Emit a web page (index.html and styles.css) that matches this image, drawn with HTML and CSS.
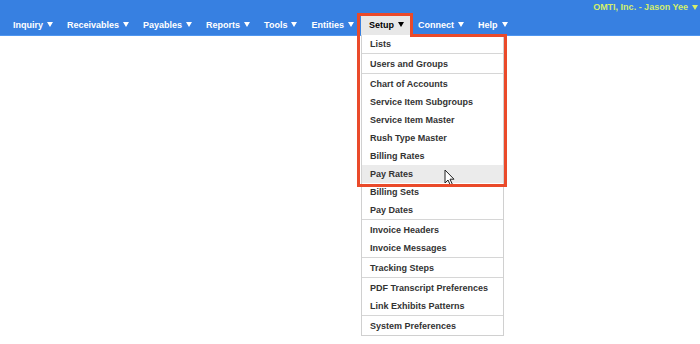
FILE: index.html
```html
<html>
  <head>
    <link rel="stylesheet" href="styles.css">
  </head>
  <body>

    <div class="topbar">
      <div class="user">OMTI, Inc. - Jason Yee<span class="caret"></span></div>
      <ul class="nav">
        <li class="nav-item">Inquiry<span class="caret"></span></li>
        <li class="nav-item">Receivables<span class="caret"></span></li>
        <li class="nav-item">Payables<span class="caret"></span></li>
        <li class="nav-item">Reports<span class="caret"></span></li>
        <li class="nav-item">Tools<span class="caret"></span></li>
        <li class="nav-item">Entities<span class="caret"></span></li>
        <li class="nav-item open">Setup<span class="caret"></span>
          <div class="dropdown">
            <div class="group">
              <div class="item">Lists</div>
            </div>
            <div class="group">
              <div class="item">Users and Groups</div>
            </div>
            <div class="group">
              <div class="item">Chart of Accounts</div>
              <div class="item">Service Item Subgroups</div>
              <div class="item">Service Item Master</div>
              <div class="item">Rush Type Master</div>
              <div class="item">Billing Rates</div>
              <div class="item hover">Pay Rates
                <svg class="cursor" width="12" height="18" viewBox="0 0 12 18">
                  <path d="M1 1 L1 14 L4 11 L6.5 16.5 L8.5 15.6 L6 10.2 L10 10.2 Z" fill="#fff" stroke="#222" stroke-width="1" stroke-linejoin="round"/>
                </svg>
              </div>
              <div class="item">Billing Sets</div>
              <div class="item">Pay Dates</div>
            </div>
            <div class="group">
              <div class="item">Invoice Headers</div>
              <div class="item">Invoice Messages</div>
            </div>
            <div class="group">
              <div class="item">Tracking Steps</div>
            </div>
            <div class="group">
              <div class="item">PDF Transcript Preferences</div>
              <div class="item">Link Exhibits Patterns</div>
            </div>
            <div class="group">
              <div class="item">System Preferences</div>
            </div>
          </div>
        </li>
        <li class="nav-item">Connect<span class="caret"></span></li>
        <li class="nav-item">Help<span class="caret"></span></li>
      </ul>
    </div>

    <svg class="highlight" width="700" height="344" viewBox="0 0 700 344">
      <path d="M358.5 185.5 V14.5 H411.5 V35.5 H505.5 V185.5 Z" fill="none" stroke="#ea4a2a" stroke-width="3"/>
    </svg>

  </body>
</html>
```

FILE: styles.css
```css
body {
  font-family: "Liberation Sans", Arial, sans-serif;
  font-size: 9px;
  font-weight: bold;
  margin: 0;
  background: #FFFFFF;
}

.topbar {
  background: #3780E1;
  border-bottom: 1px solid #4F96F0;
}

.user {
  display: flex;
  justify-content: flex-end;
  align-items: center;
  height: 14px;
  padding-right: 2px;
  color: #D3EE6B;
}

.caret {
  display: inline-block;
  width: 0;
  height: 0;
  margin-left: 4px;
  border-left: 3.5px solid transparent;
  border-right: 3.5px solid transparent;
  border-top: 5px solid currentColor;
}

.nav {
  display: flex;
  margin: 0;
  padding: 0 0 0 6px;
  list-style: none;
}

.nav-item {
  position: relative;
  display: flex;
  align-items: center;
  height: 21px;
  padding: 0 7px;
  color: #FFFFFF;
}

.nav-item.open {
  padding-left: 8px;
  color: #000000;
  background: #E8E8E8;
}

.dropdown {
  position: absolute;
  top: 21px;
  left: 0;
  width: 141px;
  background: #FFFFFF;
  border: 1px solid #D0D0D0;
  border-top: none;
  color: #333333;
  z-index: 1;
}

.group + .group {
  border-top: 1px solid #D6D6D6;
  padding-top: 1px;
}

.item {
  position: relative;
  height: 18px;
  line-height: 18px;
  padding-left: 8px;
}

.item.hover {
  background: #EBEBEB;
}

.cursor {
  position: absolute;
  left: 82px;
  top: 4px;
}

.highlight {
  position: absolute;
  top: 0;
  left: 0;
  pointer-events: none;
  z-index: 2;
}
```
